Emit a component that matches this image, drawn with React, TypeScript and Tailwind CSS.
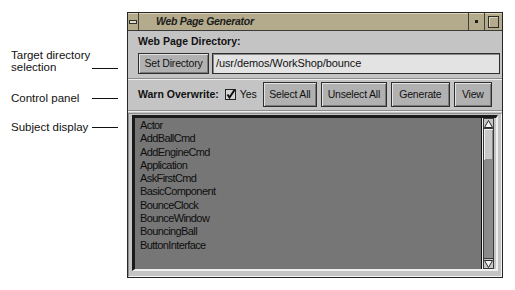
import React from 'react';

const classNames = [
  'Actor',
  'AddBallCmd',
  'AddEngineCmd',
  'Application',
  'AskFirstCmd',
  'BasicComponent',
  'BounceClock',
  'BounceWindow',
  'BouncingBall',
  'ButtonInterface',
];

const MotifButton: React.FC<{ label: string; className?: string }> = ({ label, className }) => (
  <button
    className={`h-full border border-[#2e2e2e] bg-[#b1b1b1] shadow-[inset_1px_1px_0_#e4e4e4,inset_-1px_-1px_0_#7a7a7a] text-[10.5px] leading-none tracking-[-0.2px] text-[#111] ${className ?? ''}`}
  >
    {label}
  </button>
);

const Arrow: React.FC<{ up?: boolean }> = ({ up }) => (
  <div className="h-[11px] flex items-center justify-center bg-[#c6c6c6] border border-[#3a3a3a]">
    <svg width="9" height="8" viewBox="0 0 9 8">
      <polygon
        points={up ? '0.5,7.5 4.5,0.5 8.5,7.5' : '0.5,0.5 4.5,7.5 8.5,0.5'}
        fill="#f4f4f4"
        stroke="#2a2a2a"
        strokeWidth="1"
      />
    </svg>
  </div>
);

const Separator = () => (
  <div className="-ml-[10px] -mr-[2px] h-[2px] border-t border-t-[#8c8c8c] border-b border-b-[#efefef]" />
);

export default function App() {
  return (
    <div className="w-[515px] h-[290px] bg-white flex font-[Liberation_Sans,Arial,sans-serif] text-[#111]">
      {/* callout labels */}
      <div className="w-[127px] shrink-0 pl-[11px] pt-[49px] flex flex-col">
        <div className="flex items-end">
          <div className="w-[81px] text-[11.5px] leading-[12px]">
            <div>Target directory</div>
            <div>selection</div>
          </div>
          <div className="w-[26px] h-px bg-[#111] mb-[4px]" />
        </div>
        <div className="mt-[19px] flex items-center h-[12px]">
          <div className="w-[81px] text-[11.5px] leading-[12px]">Control panel</div>
          <div className="w-[26px] h-px bg-[#111]" />
        </div>
        <div className="mt-[17px] flex items-center h-[12px]">
          <div className="w-[81px] text-[11.5px] leading-[12px]">Subject display</div>
          <div className="w-[26px] h-px bg-[#111]" />
        </div>
      </div>

      {/* window */}
      <div className="mt-[12px] w-[376px] h-[266px] border border-[#262626] bg-[#c4c4c4] flex flex-col">
        {/* title bar */}
        <div className="h-[18px] flex bg-[#b3ab8b] border-b border-[#3a3a3a] shadow-[inset_0_1px_0_#d9d3b8]">
          <div className="w-[11px] border-r border-[#3f3f3f] flex items-center justify-center">
            <div className="w-[8px] h-[4px] border border-[#2e2e2e] bg-[#e0dcc8]" />
          </div>
          <div className="pl-[17px] flex items-center italic font-bold text-[10.5px] tracking-[-0.3px] text-[#1c1c1c]">
            Web Page Generator
          </div>
          <div className="flex-1" />
          <div className="w-[16px] border-l border-[#3f3f3f] flex items-center justify-center">
            <div className="w-[3px] h-[3px] bg-[#1e1e1e]" />
          </div>
          <div className="w-[18px] border-l border-[#3f3f3f] flex items-center justify-center">
            <div className="w-[11px] h-[12px] border border-[#2a2a2a] shadow-[inset_1px_1px_0_#d9d3b8]" />
          </div>
        </div>

        {/* body */}
        <div className="flex-1 flex flex-col pl-[10px] pr-[2px]">
          <div className="mt-[4px] h-[13px] leading-[13px] font-bold text-[10.5px]">Web Page Directory:</div>

          <div className="mt-[5px] h-[21px] flex gap-[3px]">
            <MotifButton label="Set Directory" className="w-[71px]" />
            <div className="flex-1 flex items-center pl-[3px] bg-[#e3e3e3] border border-[#2e2e2e] shadow-[inset_1px_1px_0_#8a8a8a] text-[11px] tracking-[-0.1px]">
              /usr/demos/WorkShop/bounce
            </div>
          </div>

          <div className="mt-[4px]">
            <Separator />
          </div>

          <div className="mt-[2px] h-[25px] flex items-center">
            <span className="font-bold text-[10.5px]">Warn Overwrite:</span>
            <svg width="11" height="11" viewBox="0 0 11 11" className="ml-[6px]">
              <rect x="0.5" y="0.5" width="10" height="10" fill="#d4d4d4" stroke="#222" />
              <path d="M2.5 5.5 L4.5 8.5 L9.5 1" fill="none" stroke="#111" strokeWidth="2" />
            </svg>
            <span className="ml-[4px] text-[10.5px]">Yes</span>
            <div className="ml-[6px] h-full flex gap-[4px]">
              <MotifButton label="Select All" className="w-[54px]" />
              <MotifButton label="Unselect All" className="w-[66px]" />
              <MotifButton label="Generate" className="w-[59px]" />
              <MotifButton label="View" className="w-[38px]" />
            </div>
          </div>

          <div className="mt-[3px]">
            <Separator />
          </div>

          {/* subject list */}
          <div className="mt-[1px] -ml-[10px] -mr-[2px] flex-1 flex pt-[1px] pl-[3px] pr-[3px] pb-[5px] border border-t-[#8c8c8c] border-l-[#8c8c8c] border-r-[#f2f2f2] border-b-[#f2f2f2]">
            <div className="flex-1 flex border-t-[3px] border-l-[3px] border-r-2 border-b-2 border-t-[#1a1a1a] border-l-[#1a1a1a] border-r-[#efefef] border-b-[#efefef]">
              <div className="flex-1 bg-[#767676] border-r border-[#111] pt-[1px] pl-[5px] text-[11px] leading-[13.3px] tracking-[-0.6px] text-[#0e0e0e]">
                {classNames.map(name => (
                  <div key={name}>{name}</div>
                ))}
              </div>
              <div className="w-[14px] flex flex-col border-l border-[#f0f0f0] pr-[2px] bg-[#c4c4c4]">
                <Arrow up />
                <div className="h-[31px] bg-[#c8c8c8] border-x border-[#3a3a3a] shadow-[inset_1px_1px_0_#eeeeee,inset_-1px_-1px_0_#8a8a8a]" />
                <div className="flex-1 bg-[#8a8a8a] border-x border-[#3a3a3a]" />
                <Arrow />
              </div>
            </div>
          </div>
        </div>
      </div>
    </div>
  );
}
